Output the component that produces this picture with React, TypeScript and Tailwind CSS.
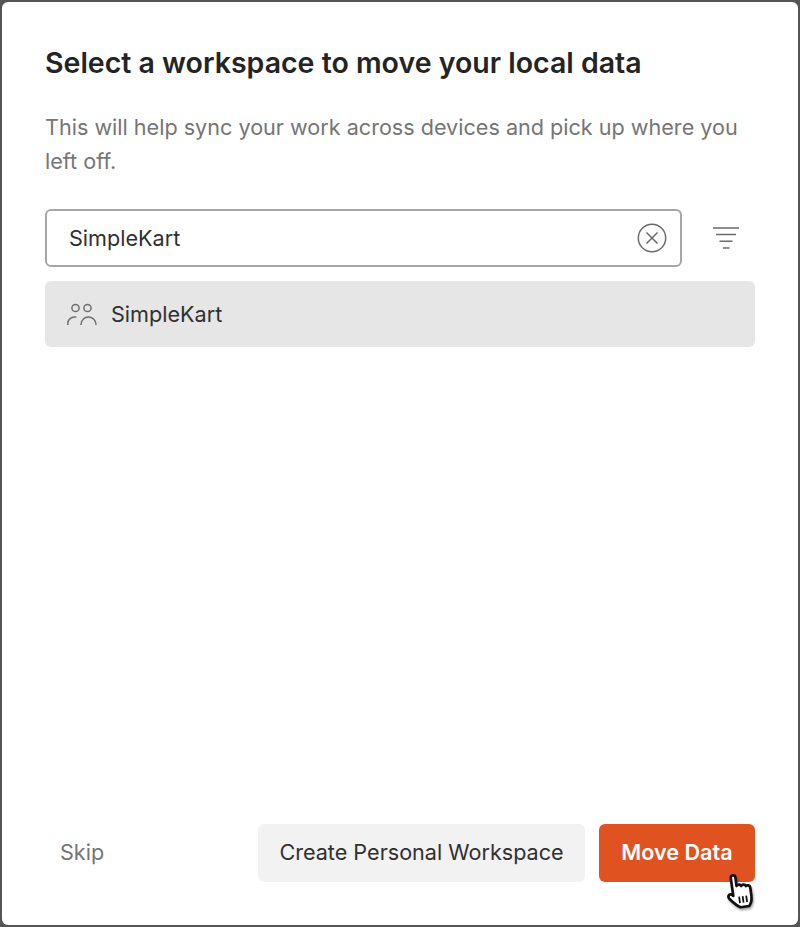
const FONT = "font-['Inter',sans-serif]";

function TeamIcon() {
  return (
    <svg width="30" height="26" viewBox="0 0 30 26" fill="none" stroke="#6e6e6e" strokeWidth="1.5">
      <circle cx="8.500" cy="7" r="3.600" />
      <circle cx="20.500" cy="7" r="3.600" />
      <path d="M0.800 24v-1.500c0-3.700 3-6.500 7-6.500h1.500" />
      <path d="M14 24v-.5a7.500 7.500 0 0 1 15 0v.5" />
    </svg>
  );
}

function ClearIcon() {
  return (
    <svg width="30" height="30" viewBox="0 0 30 30" fill="none" stroke="#6b6b6b" strokeWidth="1.500">
      <circle cx="15" cy="15" r="13.700" />
      <path d="M9.500 9.500l11 11M20.500 9.500l-11 11" />
    </svg>
  );
}

function FilterIcon() {
  return (
    <svg width="26" height="22" viewBox="0 0 26 22" fill="none" stroke="#6b6b6b" strokeWidth="1.600">
      <path d="M0 1h26M3 7.500h20M6.500 14.300h13M10 21h6.500" />
    </svg>
  );
}

// Pointer cursor sitting on top of the primary button
function HandCursor() {
  return (
    <svg
      className="absolute left-[725px] top-[872px] drop-shadow-[1px_2px_1px_rgba(0,0,0,0.35)]"
      width="34"
      height="39"
      viewBox="0 0 32 38"
    >
      <g transform="rotate(-8 16 19)">
        <path
          d="M7 4.500c0-3 4.500-3 4.500 0V13c1-1.500 4-1.500 4.500.5 1-1.500 4-1.200 4.500.8 1.200-1 4-.5 4 2V24c0 5-2 8.500-3.500 10H12.500C9.500 32.500 6.500 29 3 24.500 1 22 3 19 6 21l1 1z"
          fill="#fff"
          stroke="#111"
          strokeWidth="2.600"
          strokeLinejoin="round"
        />
        <path d="M12.500 23.500v6.500M16 23.500v6.500M19.500 23.500v6.500" stroke="#111" strokeWidth="1.700" />
      </g>
    </svg>
  );
}

export default function App() {
  return (
    <div className={`${FONT} relative h-[927px] w-[800px] bg-[#555555] p-[2px]`}>
      <div className="flex h-full flex-col rounded-[6px] bg-white pb-[43px] pl-[43px] pr-[43px] pt-[41px]">
        <h1 className="text-[28.500px] font-semibold leading-[40px] text-[#242424]">
          Select a workspace to move your local data
        </h1>
        <p className="mt-[28px] text-[21.600px] leading-[33.500px] text-[#757575]">
          This will help sync your work across devices and pick up where you left off.
        </p>

        <div className="mt-[31px] flex items-center">
          <div className="flex h-[58px] w-[637px] items-center justify-between rounded-[6px] border-2 border-[#a6a6a6] pl-[22px] pr-[13px]">
            <span className="text-[21.600px] text-[#303030]">SimpleKart</span>
            <ClearIcon />
          </div>
          <div className="ml-[31px] flex">
            <FilterIcon />
          </div>
        </div>

        <div className="mt-[14px] flex h-[66px] items-center gap-[14px] rounded-[6px] bg-[#e6e6e6] pl-[22px]">
          <TeamIcon />
          <span className="text-[21.600px] text-[#303030]">SimpleKart</span>
        </div>

        <div className="mt-auto flex items-center">
          <span className="ml-[15px] pb-[2px] text-[21.600px] text-[#757575]">Skip</span>
          <button className="ml-auto h-[58px] w-[327px] rounded-[6px] bg-[#f2f2f2] pb-[2px] text-[21.600px] text-[#303030]">
            Create Personal Workspace
          </button>
          <button className="ml-[14px] h-[58px] w-[156px] rounded-[6px] bg-[#e05320] pb-[2px] text-[21.600px] font-semibold text-white">
            Move Data
          </button>
        </div>
      </div>
      <HandCursor />
    </div>
  );
}
